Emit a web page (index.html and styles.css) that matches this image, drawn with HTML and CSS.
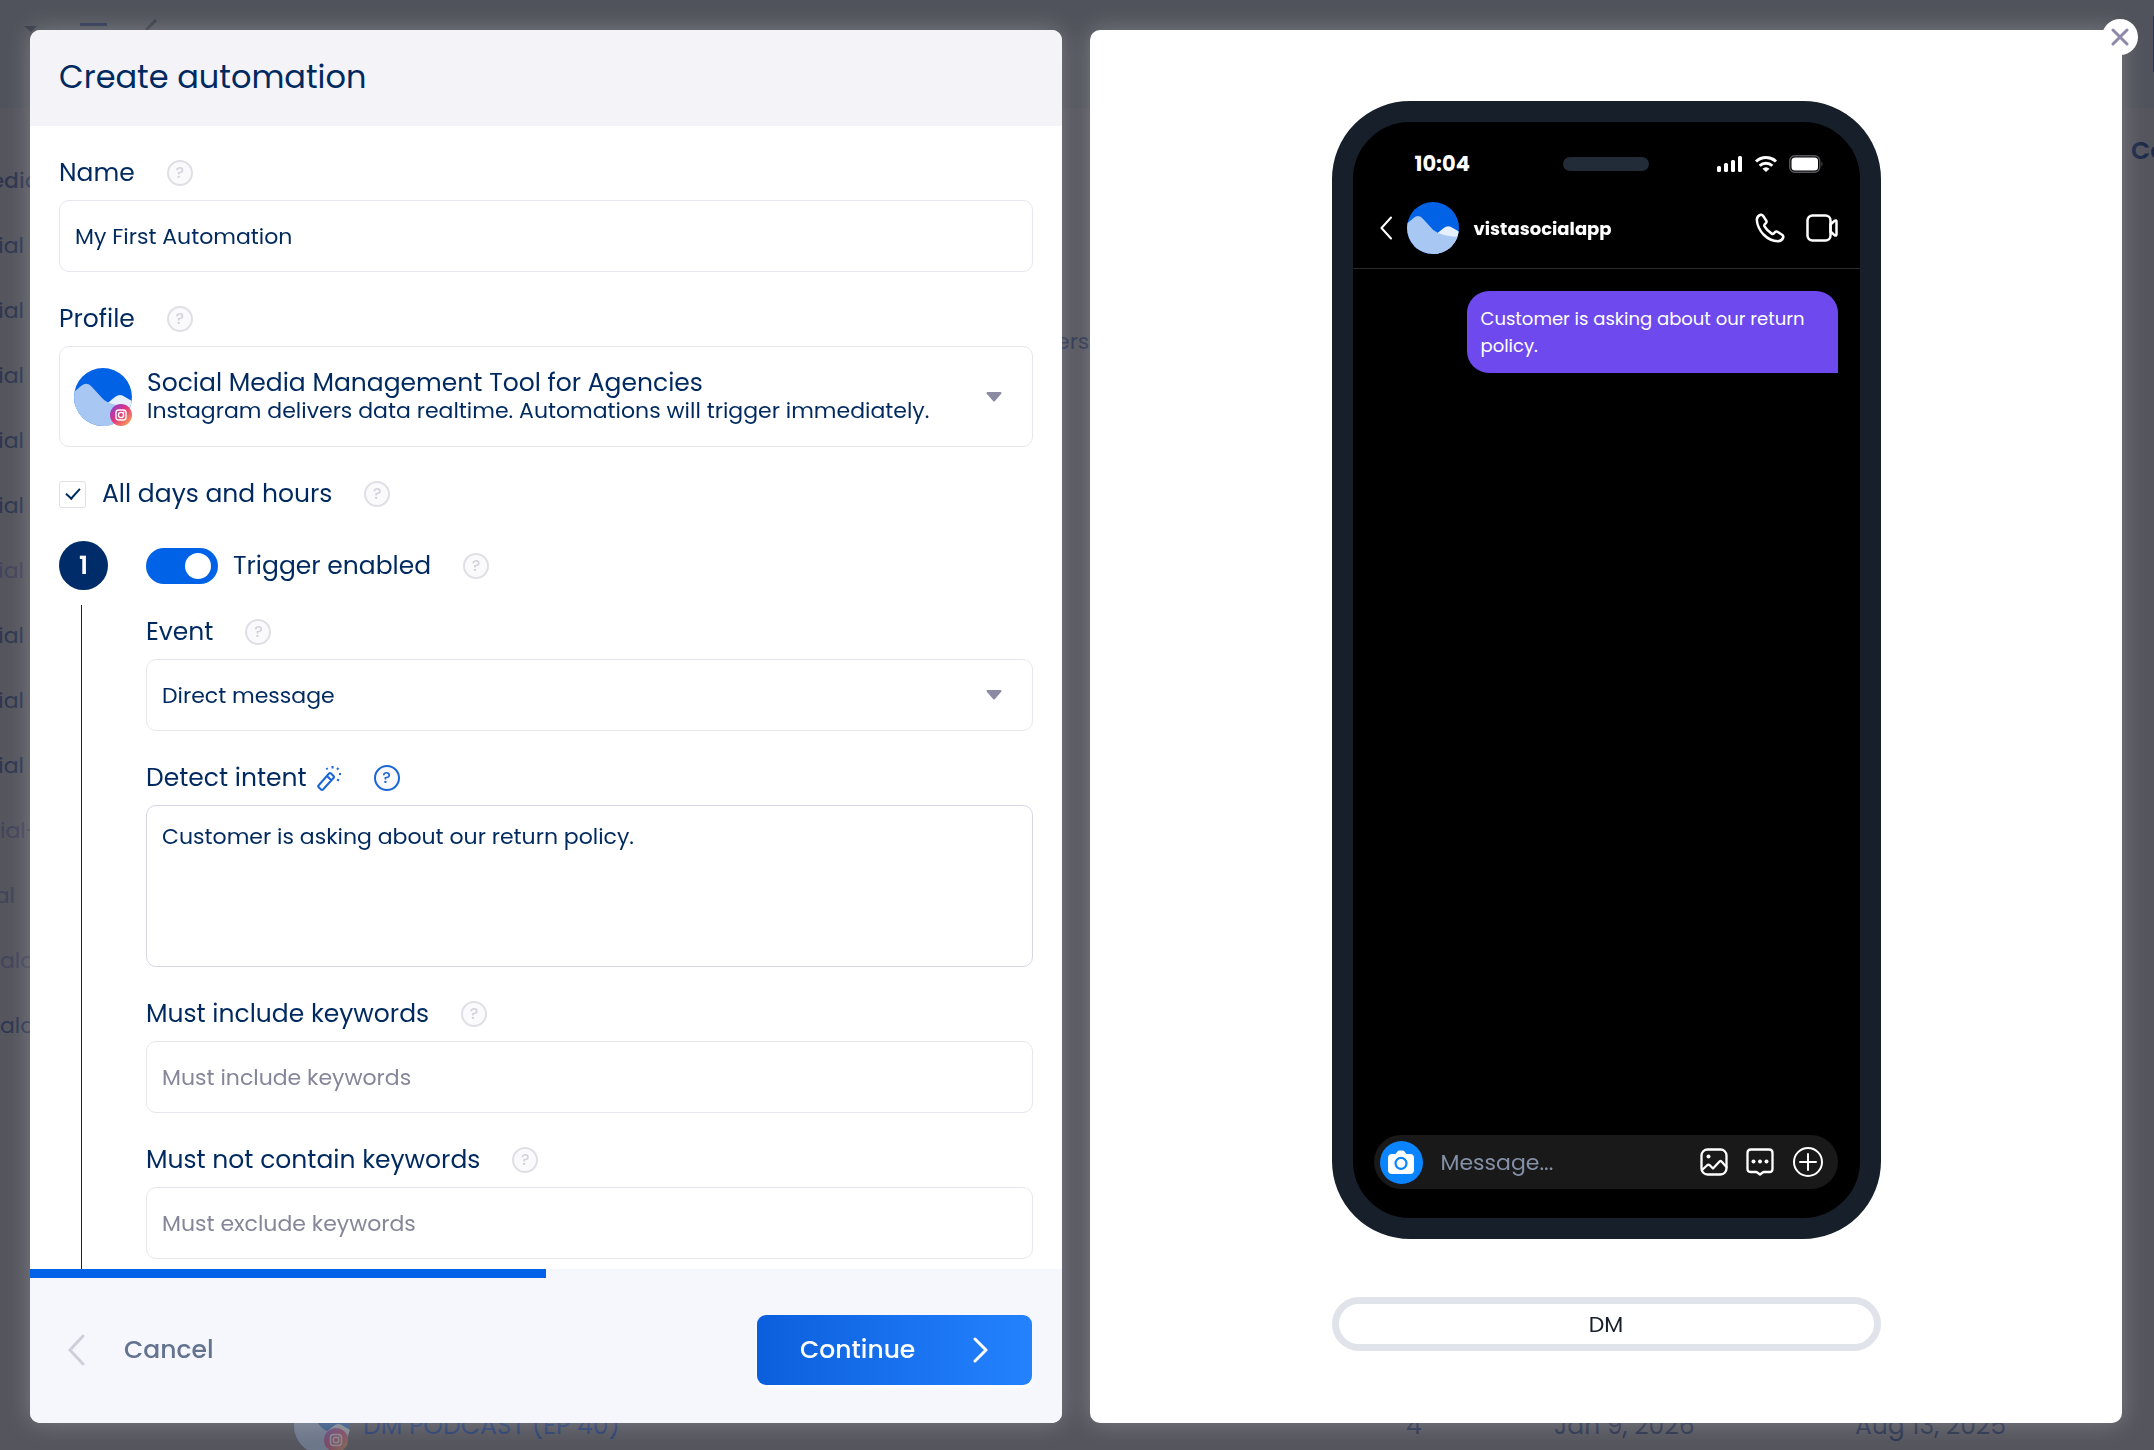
FILE: index.html
```html
<!DOCTYPE html>
<html lang="en">
<head>
  <meta charset="UTF-8" />
  <meta name="viewport" content="width=device-width, initial-scale=1.0"/>
  <title>Create automation</title>
  <link rel="stylesheet" href="styles.css">
</head>
<body>

  <svg class="sprite" aria-hidden="true">
    <symbol id="logo" viewBox="0 0 58 58">
      <clipPath id="logo-clip"><circle cx="29" cy="29" r="29"/></clipPath>
      <g clip-path="url(#logo-clip)">
        <rect width="58" height="58" fill="#0262e6"/>
        <path d="M30 38 L41 29 Q46 25 51 29 L58 33 V58 H30 Z" fill="#e6f0fd"/>
        <path d="M0 24 L7 18 Q13 13 18 19 L29 31 Q37 38 58 39 V58 H0 Z" fill="#a8c7f3"/>
      </g>
    </symbol>
    <symbol id="instagram" viewBox="0 0 24 24">
      <circle cx="12" cy="12" r="12" fill="url(#ig)"/>
      <g fill="none" stroke="#fff" stroke-width="1.5">
        <rect x="6.5" y="6.5" width="11" height="11" rx="3"/>
        <circle cx="12" cy="12" r="2.8"/>
      </g>
      <circle cx="15" cy="9" r=".8" fill="#fff"/>
    </symbol>
    <linearGradient id="ig" x1="0" y1="0" x2="1" y2="1">
      <stop offset="0" stop-color="#7b3fe0"/>
      <stop offset=".45" stop-color="#e0357f"/>
      <stop offset="1" stop-color="#fdb44b"/>
    </linearGradient>
  </svg>

  <!-- page behind the dialog -->
  <div class="page" aria-hidden="true">
    <div class="topbar">
      <svg width="140" height="16" viewBox="0 0 140 16">
        <path d="M0 10h13l-6 6z" fill="#383b49"/>
        <path d="M56 8.500h27" stroke="#2d3550" stroke-width="3"/>
        <path d="M122 14l10-10" stroke="#383b49" stroke-width="3"/>
      </svg>
      <span class="topbar-btn"></span>
    </div>
    <div class="page-body">
      <ul class="profiles">
        <li class="strong wide">edia</li>
        <li>ial</li>
        <li>ial</li>
        <li>ial</li>
        <li>ial</li>
        <li>ial</li>
        <li class="dim">ial</li>
        <li>ial</li>
        <li>ial</li>
        <li>ial</li>
        <li class="dim wide">ial-</li>
        <li class="dim short">al</li>
        <li class="dim wide">ala</li>
        <li class="wide">ala</li>
      </ul>
      <div class="page-main">
        <div class="col-head">Co</div>
        <div class="tab-tail">ers</div>
        <div class="row">
          <span class="row-avatar">
            <svg width="56" height="56"><use href="#logo"/></svg>
            <svg class="row-badge" width="24" height="24"><use href="#instagram"/></svg>
          </span>
          <span class="row-name">DM PODCAST (EP 40)</span>
          <span>4</span>
          <span>Jan 9, 2026</span>
          <span>Aug 13, 2025</span>
        </div>
      </div>
    </div>
  </div>

  <div class="modal" role="dialog" aria-labelledby="title">

    <form class="panel form-panel">
      <header class="panel-header">
        <h1 id="title">Create automation</h1>
      </header>

      <div class="panel-body">
        <div class="field">
          <div class="label-row">
            <label for="name">Name</label>
            <button type="button" class="help">?</button>
          </div>
          <input class="control" type="text" id="name" value="My First Automation">
        </div>

        <div class="field">
          <div class="label-row">
            <label for="profile">Profile</label>
            <button type="button" class="help">?</button>
          </div>
          <button type="button" class="control profile" id="profile" aria-haspopup="listbox">
            <span class="avatar">
              <svg width="58" height="58"><use href="#logo"/></svg>
              <svg class="avatar-badge" width="22" height="22"><use href="#instagram"/></svg>
            </span>
            <span class="profile-text">
              <span class="profile-name">Social Media Management Tool for Agencies</span>
              <span>Instagram delivers data realtime. Automations will trigger immediately.</span>
            </span>
            <svg class="caret" width="16" height="10" viewBox="0 0 16 10"><path d="M1.500 1h13L8 8.500z"/></svg>
          </button>
        </div>

        <div class="label-row">
          <input type="checkbox" class="check" id="all-days" checked>
          <label for="all-days">All days and hours</label>
          <button type="button" class="help">?</button>
        </div>

        <div class="step">
          <div class="rail">
            <span class="step-number">1</span>
            <span class="step-line"></span>
          </div>

          <div class="step-content">
            <div class="label-row trigger-row">
              <input type="checkbox" class="toggle" id="trigger" checked>
              <label for="trigger">Trigger enabled</label>
              <button type="button" class="help">?</button>
            </div>

            <div class="field">
              <div class="label-row">
                <label for="event">Event</label>
                <button type="button" class="help">?</button>
              </div>
              <div class="select-wrap">
                <select class="control" id="event">
                  <option>Direct message</option>
                </select>
                <svg class="caret" width="16" height="10" viewBox="0 0 16 10"><path d="M1.500 1h13L8 8.500z"/></svg>
              </div>
            </div>

            <div class="field">
              <div class="label-row">
                <label for="intent">Detect intent</label>
                <svg class="wand" width="26" height="28" viewBox="0 0 26 28">
                  <path d="M2.500 21.500L13 9.500q1-1 2 0l2.500 2.500q1 1 0 2L7 25.500q-1 1-2 0l-2.500-2.500q-.8-.8 0-1.500z M11 12l4 4"/>
                  <path d="M16.500 2v2.500 M10.500 4l1 1.500 M22.500 4l-1.500 1.500 M23 10h2 M21 15.500l2 1"/>
                </svg>
                <button type="button" class="help active">?</button>
              </div>
              <textarea class="control" id="intent">Customer is asking about our return policy.</textarea>
            </div>

            <div class="field">
              <div class="label-row">
                <label for="include">Must include keywords</label>
                <button type="button" class="help">?</button>
              </div>
              <input class="control" type="text" id="include" placeholder="Must include keywords">
            </div>

            <div class="field">
              <div class="label-row">
                <label for="exclude">Must not contain keywords</label>
                <button type="button" class="help">?</button>
              </div>
              <input class="control" type="text" id="exclude" placeholder="Must exclude keywords">
            </div>
          </div>
        </div>
      </div>

      <div class="progress"><div class="progress-fill" style="width: 50%"></div></div>

      <footer class="panel-footer">
        <button type="button" class="cancel">
          <svg width="18" height="32" viewBox="0 0 18 32"><path d="M16 2L3 16l13 14"/></svg>
          Cancel
        </button>
        <button type="button" class="continue">
          Continue
          <svg width="16" height="26" viewBox="0 0 16 26"><path d="M2 2l11 11L2 24"/></svg>
        </button>
      </footer>
    </form>

    <section class="panel preview-panel">
      <div class="phone">
        <div class="status-bar">
          <span class="time">10:04</span>
          <span class="speaker"></span>
          <span class="status-icons">
            <svg width="26" height="16" viewBox="0 0 26 16" fill="#fff">
              <rect x="0" y="10" width="4" height="6" rx="1.500"/>
              <rect x="7" y="7" width="4" height="9" rx="1.500"/>
              <rect x="14" y="4" width="4" height="12" rx="1.500"/>
              <rect x="21" y="0" width="4" height="16" rx="1.500"/>
            </svg>
            <svg width="22" height="16" viewBox="0 0 22 16" fill="none" stroke="#fff" stroke-width="3">
              <path d="M1 5.500a14.500 14.500 0 0 1 20 0"/>
              <path d="M4.700 9.700a9 9 0 0 1 12.600 0"/>
              <path d="M11 16L7.500 12.800a4.500 4.500 0 0 1 7 0z" fill="#fff" stroke="none"/>
            </svg>
            <svg width="34" height="18" viewBox="0 0 34 18">
              <rect x=".7" y=".7" width="30" height="16.500" rx="5" fill="none" stroke="#55565a" stroke-width="1.400"/>
              <rect x="2.500" y="2.500" width="26.500" height="13" rx="3.500" fill="#fff"/>
              <path d="M32.500 6.500q2 2.500 0 5z" fill="#55565a"/>
            </svg>
          </span>
        </div>

        <div class="chat-header">
          <svg width="12" height="24" viewBox="0 0 12 24" class="line-icon"><path d="M11 1.500L1.500 12 11 22.500"/></svg>
          <svg width="52" height="52"><use href="#logo"/></svg>
          <strong class="chat-name">vistasocialapp</strong>
          <svg width="30" height="30" viewBox="0 0 30 30" class="line-icon bold">
            <path d="M5.500 1.800Q2 3 1.800 7Q2.500 15 8.500 21.500Q15 28 23 28.300Q27 28 28.200 24.500Q28.600 23 27.400 22L22.500 18.800Q21.200 18 20 19.200L18.700 20.600Q17.800 21.300 16.700 20.600Q12 17.500 9.500 13.300Q9 12.200 9.700 11.400L11 10Q12 8.800 11.200 7.500L8 2.700Q7 1.300 5.500 1.800z"/>
          </svg>
          <svg width="32" height="28" viewBox="0 0 32 28" class="line-icon bold">
            <rect x="1.500" y="1.500" width="23" height="25" rx="5"/>
            <path d="M24.500 10.500l4-3.700q2-1.200 2 1V20.200q0 2.200-2 1l-4-3.700z"/>
          </svg>
        </div>

        <div class="chat">
          <p class="bubble">Customer is asking about our return policy.</p>
        </div>

        <div class="composer">
          <span class="camera">
            <svg width="26" height="24" viewBox="0 0 26 24">
              <path d="M4 4h3.500l2-2.500q.7-1 2-1h3q1.300 0 2 1L18.500 4H22q4 0 4 4v12q0 4-4 4H4q-4 0-4-4V8q0-4 4-4z" fill="#fff"/>
              <circle cx="13" cy="13.300" r="5.500" fill="#fff" stroke="#0a84ff" stroke-width="2.200"/>
            </svg>
          </span>
          <input type="text" class="message" placeholder="Message..." aria-label="Message">
          <svg width="28" height="28" viewBox="0 0 28 28" class="line-icon medium">
            <rect x="1.500" y="1.500" width="25" height="25" rx="6"/>
            <path d="M2 22l5.500-5q1-.8 2 0l3.500 3.500 6.500-7q1-1 2 0l5 5.500"/>
            <circle cx="8.500" cy="8.500" r="2" fill="#fff" stroke="none"/>
          </svg>
          <svg width="28" height="28" viewBox="0 0 28 28" class="line-icon medium">
            <path d="M5 1.500h18q3.500 0 3.500 3.500v16q0 3-3 3h-6L14 26.500 10.500 24h-6q-3 0-3-3V5q0-3.500 3.500-3.500z"/>
            <g fill="#fff" stroke="none"><circle cx="7.500" cy="13.500" r="2"/><circle cx="14" cy="13.500" r="2"/><circle cx="20.500" cy="13.500" r="2"/></g>
          </svg>
          <svg width="32" height="32" viewBox="0 0 32 32" class="line-icon">
            <circle cx="16" cy="16" r="14"/>
            <path d="M16 8v16 M8 16h16"/>
          </svg>
        </div>
      </div>

      <button type="button" class="channel">DM</button>
    </section>

    <button type="button" class="close" aria-label="Close">
      <svg width="18" height="18" viewBox="0 0 18 18"><path d="M2 2l14 14 M16 2L2 16"/></svg>
    </button>
  </div>

</body>
</html>
```
FILE: styles.css
```css
* {
  box-sizing: border-box;
}

body {
  margin: 0;
  font-family: Poppins, Inter, sans-serif;
  font-size: 22px;
  color: #002a5f;
  background-color: #54555d;
  overflow: hidden;
}

button,
input,
select,
textarea {
  font: inherit;
  color: inherit;
}

button {
  border: none;
  background: none;
  padding: 0;
  cursor: pointer;
}

svg {
  display: block;
  flex: none;
}

.sprite {
  position: absolute;
  width: 0;
  height: 0;
}

/* page behind the dialog */
.page {
  height: 100vh;
  display: flex;
  flex-direction: column;
  color: #2d3550;
}

.topbar {
  height: 108px;
  padding: 16px 0 0 24px;
  display: flex;
  justify-content: space-between;
  background-color: #50535b;
}

.topbar-btn {
  width: 1px;
  height: 56px;
  background-color: #1c3761;
}

.page-body {
  flex: 1;
  display: flex;
}

.profiles {
  list-style: none;
  width: 30px;
  margin: 0;
  padding: 40px 0 0;
  overflow: hidden;
}

.profiles li {
  display: flex;
  justify-content: flex-end;
  padding-right: 6px;
  line-height: 65px;
}

.profiles .dim {
  color: #41445a;
}

.profiles .wide {
  justify-content: flex-start;
  padding-right: 0;
}

.profiles .strong {
  justify-content: center;
  font-weight: 500;
}

.profiles .short {
  padding-right: 15px;
}

.page-main {
  flex: 1;
  display: flex;
  flex-direction: column;
}

.col-head {
  align-self: flex-end;
  width: 23px;
  padding-top: 24px;
  font-size: 25px;
  font-weight: 600;
  line-height: 38px;
  color: #1d2b4a;
  overflow: hidden;
}

.tab-tail {
  padding: 153px 0 0 1026px;
  line-height: 38px;
}

.row {
  margin-top: auto;
  padding-left: 264px;
  height: 52px;
  display: grid;
  grid-template-columns: 69px 1043px 148px 301px 1fr;
  align-items: center;
  font-size: 25px;
}

.row-name {
  color: #2c4273;
}

.row-avatar {
  position: relative;
  opacity: 0.3;
}

.row-badge {
  position: absolute;
  left: 30px;
  top: 30px;
}

/* dialog */
.modal {
  position: fixed;
  inset: 0;
  display: grid;
  grid-template-columns: 1fr 1fr;
  gap: 28px;
  padding: 30px 32px 27px 30px;
}

.panel {
  display: flex;
  flex-direction: column;
  min-height: 0;
  background-color: #fff;
  border-radius: 10px;
  box-shadow: 0 0 24px rgba(255, 255, 255, 0.25);
  overflow: hidden;
}

.panel-header {
  padding: 23px 29px 25px;
  background-color: #f3f3f8;
}

h1 {
  margin: 0;
  font-size: 32px;
  font-weight: 400;
  line-height: 48px;
}

.panel-body {
  flex: 1;
  min-height: 0;
  display: flex;
  flex-direction: column;
  gap: 28px;
  padding: 28px 29px 0;
  overflow: hidden;
}

.field {
  display: flex;
  flex-direction: column;
  gap: 8px;
}

.label-row {
  display: flex;
  align-items: center;
  font-size: 25px;
  line-height: 38px;
}

.help {
  width: 26px;
  height: 26px;
  margin-left: 32px;
  border: 2px solid #dfdfe6;
  border-radius: 50%;
  background-color: #fafafc;
  color: #d3d3dc;
  font-size: 16px;
  font-weight: 500;
  line-height: 22px;
}

.help.active {
  border-color: #1a66d6;
  color: #1a66d6;
}

.wand {
  margin-left: 9px;
  fill: none;
  stroke: #1a66d6;
  stroke-width: 2;
}

.control {
  width: 100%;
  height: 72px;
  padding: 0 15px;
  border: 1px solid #e6e6ec;
  border-radius: 10px;
  background-color: #fff;
  outline: none;
}

.control::placeholder {
  color: #86869a;
  opacity: 1;
}

select.control {
  appearance: none;
}

textarea.control {
  display: block;
  height: 162px;
  padding: 15px;
  line-height: 32px;
  border-color: #d6d6e4;
  resize: none;
}

.select-wrap {
  display: grid;
  align-items: center;
}

.select-wrap > * {
  grid-area: 1 / 1;
}

.select-wrap .caret {
  justify-self: end;
  margin-right: 31px;
  pointer-events: none;
}

.caret {
  fill: #8b8ca3;
  stroke: #8b8ca3;
  stroke-width: 2;
  stroke-linejoin: round;
}

.profile {
  height: 101px;
  display: flex;
  align-items: center;
  gap: 15px;
  padding: 0 30px 0 14px;
  text-align: left;
}

.avatar {
  position: relative;
}

.avatar-badge {
  position: absolute;
  right: 0;
  bottom: 0;
}

.profile-text {
  flex: 1;
  display: flex;
  flex-direction: column;
  line-height: 28px;
}

.profile-name {
  font-size: 25px;
}

.check {
  appearance: none;
  width: 27px;
  height: 27px;
  margin: 0 16px 0 0;
  border: 1px solid #dfdfe8;
  border-radius: 3px;
  display: grid;
  place-items: center;
}

.check:checked::before {
  content: "";
  width: 6px;
  height: 12px;
  margin-bottom: 4px;
  border: solid #002a5f;
  border-width: 0 2px 2px 0;
  transform: rotate(42deg);
}

.step {
  flex: none;
  display: flex;
  gap: 38px;
}

.rail {
  width: 49px;
  display: flex;
  flex-direction: column;
  gap: 15px;
}

.step-number {
  height: 49px;
  border-radius: 50%;
  background-color: #002d69;
  color: #fff;
  font-size: 25px;
  font-weight: 600;
  line-height: 49px;
  text-align: center;
}

.step-line {
  flex: 1;
  width: 1px;
  margin-left: 22px;
  background-color: #00285c;
}

.step-content {
  flex: 1;
  display: flex;
  flex-direction: column;
  gap: 28px;
  padding-bottom: 28px;
}

.trigger-row {
  height: 50px;
  margin-bottom: -6px;
}

.toggle {
  appearance: none;
  width: 72px;
  height: 36px;
  margin: 0 15px 0 0;
  padding: 5px 7px;
  border-radius: 18px;
  background-color: #0062e6;
  display: flex;
  justify-content: flex-end;
}

.toggle::before {
  content: "";
  width: 26px;
  height: 26px;
  border-radius: 50%;
  background-color: #fff;
}

.progress {
  height: 9px;
  background-color: #f5f7fd;
}

.progress-fill {
  height: 100%;
  background-color: #0062e6;
}

.panel-footer {
  display: flex;
  justify-content: space-between;
  align-items: center;
  padding: 37px 30px 38px 37px;
  background-color: #f5f7fd;
  font-size: 25px;
  font-weight: 500;
}

.cancel {
  display: flex;
  align-items: center;
  gap: 39px;
  color: #637390;
}

.cancel svg {
  fill: none;
  stroke: #cdd0d9;
  stroke-width: 3;
  stroke-linecap: round;
}

.continue {
  width: 275px;
  height: 70px;
  padding: 0 43px;
  display: flex;
  justify-content: space-between;
  align-items: center;
  border-radius: 9px;
  background: linear-gradient(90deg, #0c5fdc, #2482ff);
  box-shadow: 0 3px 4px #fff;
  color: #fff;
}

.continue svg {
  fill: none;
  stroke: #fff;
  stroke-width: 3;
  stroke-linecap: round;
  stroke-linejoin: round;
}

/* preview */
.preview-panel {
  align-items: center;
  gap: 58px;
  padding: 71px 0;
}

.phone {
  width: 549px;
  height: 1138px;
  flex: none;
  display: flex;
  flex-direction: column;
  border: 21px solid #17202a;
  border-radius: 78px;
  background-color: #000;
  color: #fff;
}

.status-bar {
  display: flex;
  justify-content: space-between;
  align-items: center;
  padding: 26px 37px 0 62px;
  line-height: 32px;
}

.time {
  width: 105px;
  font-size: 21px;
  font-weight: 700;
}

.speaker {
  width: 86px;
  height: 14px;
  border-radius: 7px;
  background-color: #222b38;
}

.status-icons {
  width: 131px;
  display: flex;
  justify-content: flex-end;
  align-items: center;
  gap: 12px;
}

.chat-header {
  display: flex;
  align-items: center;
  height: 89px;
  padding: 8px 22px 0 27px;
  gap: 15px;
  border-bottom: 1px solid #2b2c30;
}

.chat-name {
  flex: 1;
  font-size: 18px;
  font-weight: 700;
}

.chat-header .bold + .bold {
  margin-left: 6px;
}

.line-icon {
  fill: none;
  stroke: #fff;
  stroke-width: 2;
  stroke-linecap: round;
  stroke-linejoin: round;
}

.medium {
  stroke-width: 2.3;
}

.bold {
  stroke-width: 2.5;
}

.chat {
  flex: 1;
  padding: 22px 22px 0;
}

.bubble {
  width: 371px;
  margin: 0 0 0 auto;
  padding: 14px;
  border-radius: 22px 22px 0 22px;
  background-color: #6e49ee;
  font-size: 18px;
  line-height: 27px;
}

.composer {
  display: flex;
  align-items: center;
  gap: 18px;
  height: 54px;
  margin: 0 22px 29px 21px;
  padding: 0 14px 0 6px;
  border-radius: 27px;
  background-color: #191919;
}

.camera {
  flex: none;
  width: 43px;
  height: 43px;
  display: grid;
  place-items: center;
  border-radius: 50%;
  background-color: #0a84ff;
}

.message {
  flex: 1;
  min-width: 0;
  padding: 0;
  border: none;
  background: none;
  outline: none;
}

.message::placeholder {
  color: #8390a5;
  opacity: 1;
}

.channel {
  width: 549px;
  height: 54px;
  border: 7px solid #e0e3ea;
  border-radius: 27px;
  color: #17202a;
}

/* sits over the corner of the preview */
.close {
  position: absolute;
  top: 19px;
  right: 16px;
  width: 36px;
  height: 36px;
  display: grid;
  place-items: center;
  border-radius: 50%;
  background-color: #fff;
}

.close svg {
  fill: none;
  stroke: #8d89a6;
  stroke-width: 3;
  stroke-linecap: round;
}
```
